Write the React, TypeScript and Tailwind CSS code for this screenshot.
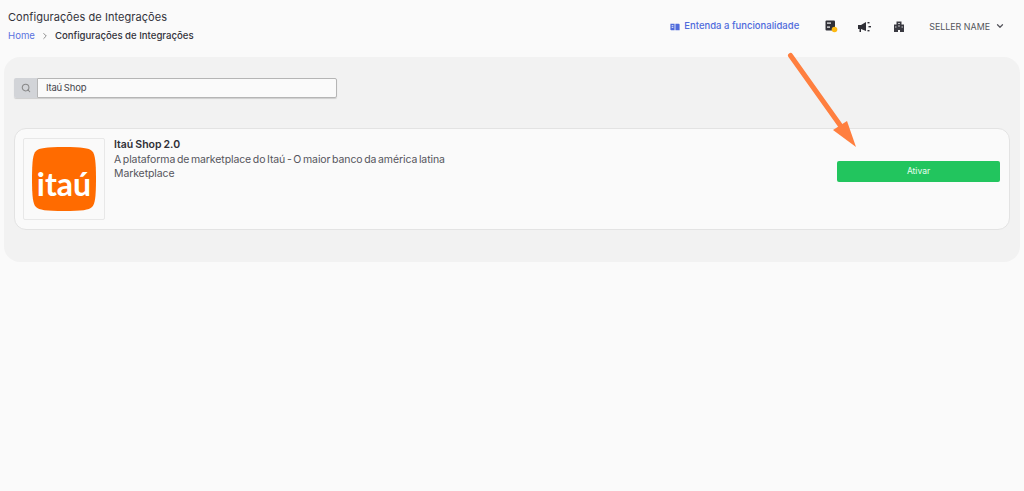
import { ChevronDown, ChevronRight, Search } from "lucide-react";

const font = { fontFamily: "Inter, 'Noto Sans', sans-serif" };

const ArrowOverlay = () => (
  <svg className="absolute left-[780px] top-[48px]" width="80" height="105" viewBox="0 0 80 105">
    <path d="M10.5 7.5 L60 77" stroke="#ff7f3f" strokeWidth="5" strokeLinecap="round" fill="none" />
    <path d="M76 99 L53 82 L67 73 Z" fill="#ff7f3f" />
  </svg>
);

const GuideIcon = () => (
  <svg width="10" height="10" viewBox="0 0 24 24" fill="#4f6bdc">
    <path d="M1 4h10v16H3a2 2 0 0 1-2-2V4zm12 0h8a2 2 0 0 1 2 2v14H13V4z" />
    <path d="M4 8h4v2H4zM4 12h4v2H4z" fill="#fafafa" />
  </svg>
);

const ServerIcon = () => (
  <svg width="13" height="13" viewBox="0 0 13 13">
    <rect x="0.5" y="0.5" width="9.5" height="10" rx="1" fill="#2f2f36" />
    <rect x="2" y="2.5" width="4" height="1.2" fill="#fafafa" />
    <rect x="2" y="6.5" width="3" height="1.2" fill="#fafafa" />
    <circle cx="9.5" cy="9.5" r="2.8" fill="#fdb913" />
  </svg>
);

const MegaphoneIcon = () => (
  <svg width="13" height="12" viewBox="0 0 13 12" fill="#2f2f36">
    <path d="M0 4h3l5-3v9L3 8v3H1.5V8H0z" />
    <rect x="9.5" y="1" width="2" height="1.4" />
    <rect x="10.5" y="5" width="2.5" height="1.4" />
    <rect x="9.5" y="9" width="2" height="1.4" />
  </svg>
);

const BuildingIcon = () => (
  <svg width="10" height="11" viewBox="0 0 10 11" fill="#3a3a41">
    <path d="M0 3.5h2.5V0.5h5v3H10V11H6V9H4v2H0z" />
    <rect x="4.3" y="2" width="1.4" height="1" fill="#fafafa" />
    <rect x="4.3" y="4.5" width="1.4" height="1" fill="#fafafa" />
    <rect x="1.2" y="5.5" width="1.2" height="1" fill="#fafafa" />
    <rect x="7.6" y="5.5" width="1.2" height="1" fill="#fafafa" />
  </svg>
);

const ItauLogo = () => (
  <svg width="64" height="64" viewBox="0 0 64 64">
    <path
      d="M32 0C50 0 57 1 60 4C63 7 64 14 64 32C64 50 63 57 60 60C57 63 50 64 32 64C14 64 7 63 4 60C1 57 0 50 0 32C0 14 1 7 4 4C7 1 14 0 32 0Z"
      fill="#ff6b00"
    />
    <text x="32" y="49" textAnchor="middle" fill="#fff" fontSize="32" fontWeight="700" fontFamily="Lato, sans-serif">
      itaú
    </text>
  </svg>
);

export default function App() {
  return (
    <div className="relative min-h-[491px] bg-[#fafafa] overflow-hidden" style={font}>
      <header className="flex justify-between h-[57px] pl-2 pr-[19px]">
        <div className="pt-[10px]">
          <h1 className="text-[11px] leading-[14px] tracking-[0.06px] text-[#33333b]">Configurações de Integrações</h1>
          <div className="flex items-center mt-[5px] text-[9.6px] leading-[14px]">
            <span className="text-[#5a73df]">Home</span>
            <ChevronRight className="mx-[5px] text-[#777]" size={10} />
            <span className="text-[#33333b] font-medium">Configurações de Integrações</span>
          </div>
        </div>
        <div className="flex items-center pb-[4px] text-[9.5px]">
          <div className="flex items-center gap-[4px] text-[#4f6bdc] font-medium">
            <GuideIcon />
            <span>Entenda a funcionalidade</span>
          </div>
          <div className="ml-[26px] flex">
            <ServerIcon />
          </div>
          <div className="ml-[20px] flex">
            <MegaphoneIcon />
          </div>
          <div className="ml-[23px] flex">
            <BuildingIcon />
          </div>
          <div className="ml-[25px] flex items-center gap-[5px] text-[#55555c] text-[8.9px]">
            <span>SELLER NAME</span>
            <ChevronDown size={10} strokeWidth={3} />
          </div>
        </div>
      </header>

      <main className="ml-1 mr-[4px] h-[205px] rounded-2xl bg-[#f2f2f2] px-[10px] pt-[21px]">
        <div className="flex h-[20px] w-[323px] rounded-[2px] shadow-[0_1px_1px_rgba(0,0,0,0.15)]">
          <div className="flex w-[23px] items-center justify-center bg-[#d2d4d8] rounded-l-[2px]">
            <Search size={10} strokeWidth={2.5} className="text-[#888]" />
          </div>
          <div className="flex flex-1 items-center rounded-r-[2px] border border-[#b5b5b5] bg-[#fafafa] pl-2 text-[9.5px] tracking-[-0.2px] [word-spacing:-0.6px] text-[#44444b]">
            Itaú Shop
          </div>
        </div>

        <div className="mt-[30px] flex h-[102px] items-start rounded-xl border border-[#e3e3e3] bg-[#fafafa] pl-[8px] pr-[9px] pt-[9px]">
          <div className="flex h-[82px] w-[82px] shrink-0 items-center justify-center rounded-[2px] border border-[#e8e8e8]">
            <ItauLogo />
          </div>
          <div className="ml-[9px] flex-1 text-[10.5px] leading-[14.5px] text-[#55555c]">
            <div className="font-semibold text-[#2f2f36] [word-spacing:-0.6px]">Itaú Shop 2.0</div>
            <div className="tracking-[-0.1px] [word-spacing:-1.15px]">A plataforma de marketplace do Itaú - O maior banco da américa latina</div>
            <div className="tracking-[-0.1px]">Marketplace</div>
          </div>
          <button className="mt-[23px] flex h-[21px] w-[163px] items-center justify-center rounded-[2px] bg-[#22c55e] text-[8.5px] text-[#e8fff0]">
            Ativar
          </button>
        </div>
      </main>

      <ArrowOverlay />
    </div>
  );
}
